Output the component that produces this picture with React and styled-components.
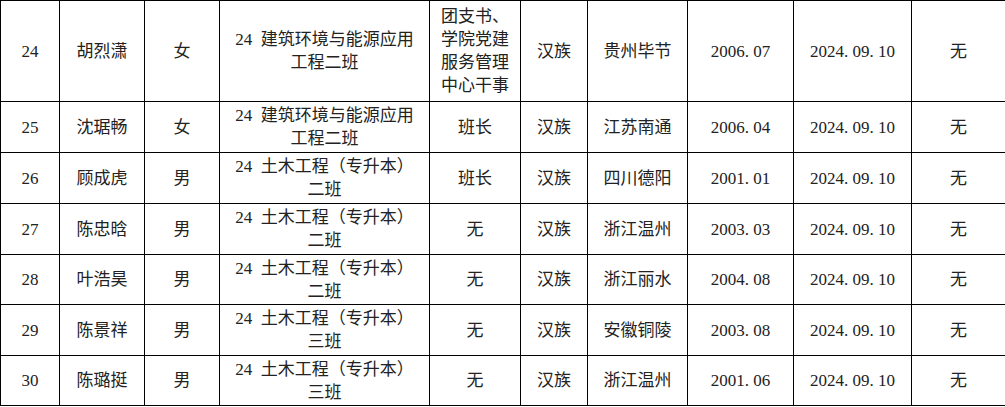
import React from 'react'
import styled, {createGlobalStyle} from 'styled-components'

const Global = createGlobalStyle`
  html, body {
    margin: 0;
    padding: 0;
    background: #fff;
  }
`

const Sheet = styled.table`
  border-collapse: collapse;
  table-layout: fixed;
  width: 1005px;
  font-family: "Liberation Serif", "Noto Sans CJK SC", serif;
  font-size: 17px;
  line-height: 23px;
  color: #222;
`

const Col = styled.col`
  width: ${p => p.w}px;
`

const Row = styled.tr`
  height: ${p => p.h}px;
`

const Cell = styled.td`
  border: 1px solid #000;
  padding: 0;
  text-align: center;
  vertical-align: middle;
  white-space: nowrap;
  overflow: hidden;
`

// half-width cell, as SimSun lays out ASCII
const Half = styled.span`
  display: inline-block;
  width: 0.5em;
  text-align: left;
`

const widths = [59, 85, 75, 210, 91, 67, 100, 106, 118, 94]

const rows = [
  {no: 24, name: '胡烈潇', sex: '女', major: '建筑环境与能源应用', cls: '工程二班', role: ['团支书、', '学院党建', '服务管理', '中心干事'], home: '贵州毕节', born: '2006.07', h: 101},
  {no: 25, name: '沈琚畅', sex: '女', major: '建筑环境与能源应用', cls: '工程二班', role: ['班长'], home: '江苏南通', born: '2006.04', h: 51},
  {no: 26, name: '顾成虎', sex: '男', major: '土木工程（专升本）', cls: '二班', role: ['班长'], home: '四川德阳', born: '2001.01', h: 51},
  {no: 27, name: '陈忠晗', sex: '男', major: '土木工程（专升本）', cls: '二班', role: ['无'], home: '浙江温州', born: '2003.03', h: 51},
  {no: 28, name: '叶浩昊', sex: '男', major: '土木工程（专升本）', cls: '二班', role: ['无'], home: '浙江丽水', born: '2004.08', h: 50},
  {no: 29, name: '陈景祥', sex: '男', major: '土木工程（专升本）', cls: '三班', role: ['无'], home: '安徽铜陵', born: '2003.08', h: 51},
  {no: 30, name: '陈璐挺', sex: '男', major: '土木工程（专升本）', cls: '三班', role: ['无'], home: '浙江温州', born: '2001.06', h: 50},
]

const DateText = ({value}) => {
  const parts = value.split('.')
  return parts.map((p, i) => (
    <React.Fragment key={i}>
      {p}
      {i < parts.length - 1 && <Half>.</Half>}
    </React.Fragment>
  ))
}

const Lines = ({lines}) =>
  lines.map((l, i) => (
    <React.Fragment key={i}>
      {i > 0 && <br />}
      {l}
    </React.Fragment>
  ))

const App = () => {
  return (
    <>
      <Global />
      <Sheet>
        <colgroup>
          {widths.map((w, i) => (
            <Col key={i} w={w} />
          ))}
        </colgroup>
        <tbody>
          {rows.map(r => (
            <Row key={r.no} h={r.h}>
              <Cell>{r.no}</Cell>
              <Cell>{r.name}</Cell>
              <Cell>{r.sex}</Cell>
              <Cell>
                24<Half />
                {r.major}
                <br />
                {r.cls}
              </Cell>
              <Cell>
                <Lines lines={r.role} />
              </Cell>
              <Cell>汉族</Cell>
              <Cell>{r.home}</Cell>
              <Cell>
                <DateText value={r.born} />
              </Cell>
              <Cell>
                <DateText value="2024.09.10" />
              </Cell>
              <Cell>无</Cell>
            </Row>
          ))}
        </tbody>
      </Sheet>
    </>
  )
}

export default App
